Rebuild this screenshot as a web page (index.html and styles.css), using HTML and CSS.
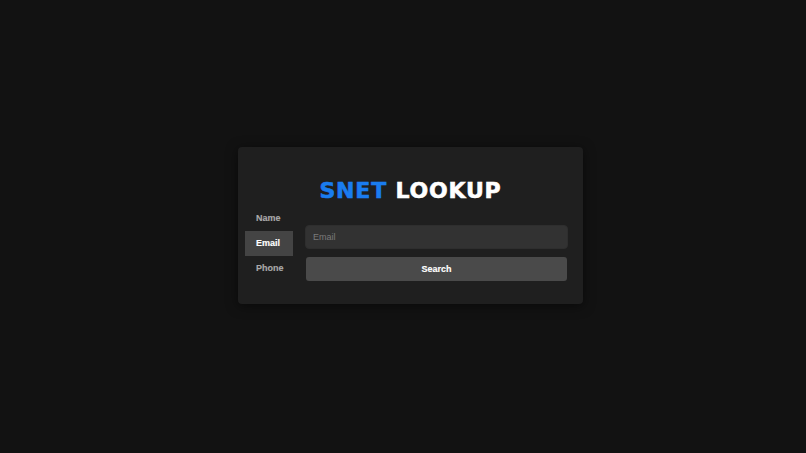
FILE: index.html
```html
<!DOCTYPE html>
<html>
<head>
<meta charset="utf-8">
<link rel="stylesheet" href="styles.css">
</head>
<body>
<div class="card">
  <h1 class="title"><span class="blue">SNET</span> LOOKUP</h1>
  <div class="body">
    <div class="tabs">
      <div class="tab">Name</div>
      <div class="tab active">Email</div>
      <div class="tab">Phone</div>
    </div>
    <div class="form">
      <input class="input" type="text" placeholder="Email">
      <button class="btn">Search</button>
    </div>
  </div>
</div>
</body>
</html>
```
FILE: styles.css
```css
html, body {
  margin: 0;
  padding: 0;
  height: 100%;
}
body {
  background: #121212;
  font-family: "Liberation Sans", Arial, sans-serif;
  display: flex;
  align-items: center;
  justify-content: center;
}
.card {
  width: 345px;
  box-sizing: border-box;
  background: #1f1f1f;
  border-radius: 4px;
  box-shadow: 0 2px 12px rgba(0,0,0,0.5);
  padding: 31px 15px 23px 7px;
  margin-top: -2px;
  margin-left: 15px;
}
.title {
  margin: 0 0 3px 0;
  font-family: "DejaVu Sans", sans-serif;
  font-size: 22px;
  line-height: 25px;
  font-weight: bold;
  letter-spacing: 0.8px;
  -webkit-text-stroke: 0.6px currentColor;
  text-align: center;
  color: #ffffff;
  padding-left: 8px;
}
.blue { color: #1a7cf0; }
.body {
  display: flex;
  align-items: flex-end;
  gap: 12px;
}
.tabs {
  display: flex;
  flex-direction: column;
  width: 48px;
}
.tab {
  height: 25px;
  line-height: 25px;
  font-size: 9px;
  font-weight: bold;
  color: #aaaaaa;
  padding-left: 11px;
  -webkit-text-stroke: 0.15px currentColor;
}
.tab.active {
  background: #444444;
  color: #ffffff;
}
.form {
  flex: 1;
  display: flex;
  flex-direction: column;
  gap: 8px;
}
.input {
  height: 24px;
  box-sizing: border-box;
  background: #323232;
  border: 1px solid #2e2e2e;
  border-radius: 4px;
  padding: 0 7px;
  font-family: "Liberation Sans", Arial, sans-serif;
  font-size: 9px;
  color: #dddddd;
  outline: none;
}
.input::placeholder { color: #7a7a7a; }
.btn {
  margin: 0 1px;
  height: 24px;
  background: #4a4a4a;
  border: none;
  border-radius: 3px;
  font-family: "Liberation Sans", Arial, sans-serif;
  font-size: 9px;
  font-weight: bold;
  color: #ffffff;
  -webkit-text-stroke: 0.15px currentColor;
}
```
